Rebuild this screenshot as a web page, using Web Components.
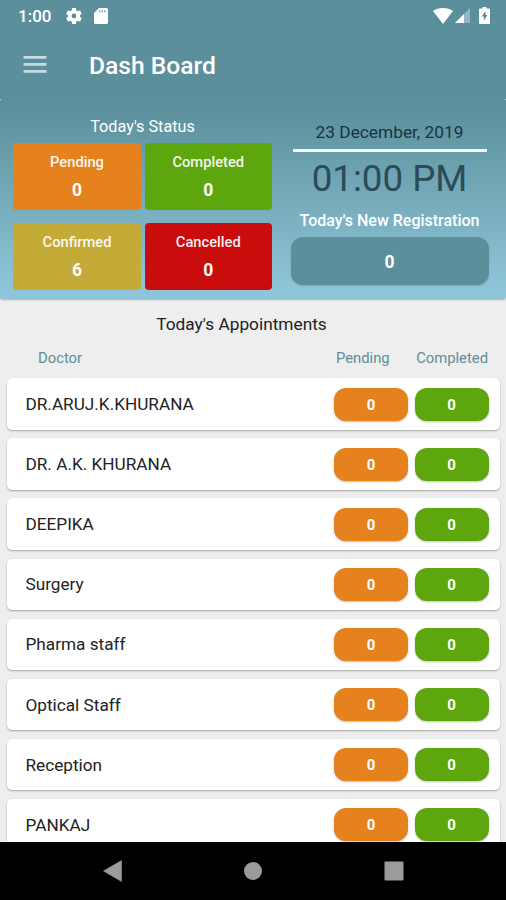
<!DOCTYPE html>
<html lang="en">
<head>
<meta charset="utf-8">
<title>Dash Board</title>
<style>
    body {
        margin: 0;
        width: 506px;
        height: 900px;
        overflow: hidden;
        background: #eeeeee;
        font-family: Roboto, "Liberation Sans", sans-serif;
        --teal: #5c8f9c;
        --orange: #e6821e;
        --green: #5da60d;
        --olive: #c4aa36;
        --red: #ca0c0d;
    }
</style>
</head>
<body>
<clinic-dashboard></clinic-dashboard>

<script>
class StatusBar extends HTMLElement {
    constructor() {
        super();
        this.attachShadow({ mode: 'open' });

        this.shadowRoot.innerHTML = `
            <style>
                :host {
                    display: flex;
                    align-items: center;
                    height: 32px;
                    box-sizing: border-box;
                    padding: 0 17px 1px 18px;
                    color: #fff;
                    font-size: 17px;
                    font-weight: 500;
                }
                .time { width: 48px; }
                .spacer { flex: 1; }
                svg { display: block; fill: currentColor; }
            </style>
            <span class="time"><slot></slot></span>
            <svg width="16" height="16" viewBox="2 2 20 20"><path d="M19.43 12.98c.04-.32.07-.64.07-.98s-.03-.66-.07-.98l2.11-1.65c.19-.15.24-.42.12-.64l-2-3.46c-.12-.22-.39-.3-.61-.22l-2.49 1c-.52-.4-1.08-.73-1.69-.98l-.38-2.65A.49.49 0 0 0 14 2h-4c-.25 0-.46.18-.49.42l-.38 2.65c-.61.25-1.17.59-1.69.98l-2.49-1c-.23-.09-.49 0-.61.22l-2 3.46c-.13.22-.07.49.12.64l2.11 1.65c-.04.32-.07.65-.07.98s.03.66.07.98l-2.11 1.65c-.19.15-.24.42-.12.64l2 3.46c.12.22.39.3.61.22l2.49-1c.52.4 1.08.73 1.69.98l.38 2.65c.03.24.24.42.49.42h4c.25 0 .46-.18.49-.42l.38-2.65c.61-.25 1.17-.59 1.69-.98l2.49 1c.23.09.49 0 .61-.22l2-3.46c.12-.22.07-.49-.12-.64zM12 15a3 3 0 1 1 0-6 3 3 0 0 1 0 6z"/></svg>
            <svg width="14" height="16" viewBox="0 0 14 16" style="margin-left:12px"><path d="M5 0h7.300Q14 0 14 1.600v12.800Q14 16 12.300 16H1.700Q0 16 0 14.400V5z"/><path d="M5 2h1.500v2.600H5zM7.500 2H9v2.600H7.500zM10 2h1.600v2.600H10z" fill="#5c8f9c" opacity=".6"/></svg>
            <span class="spacer"></span>
            <svg width="20" height="16" viewBox="0 0 20 16"><path d="M10 16 0 3Q4 0 10 0t10 3z"/></svg>
            <svg width="15" height="15" viewBox="0 0 15 15" style="margin-left:2px"><path d="M0 15 15 0v15z" opacity=".35"/><path d="M0 15 9 6v9z"/></svg>
            <svg width="11" height="17" viewBox="0 0 11 17" style="margin-left:9px;margin-right:-1px"><path fill-rule="evenodd" d="M3.500 0h4v1.500H10q1 0 1 1V16q0 1-1 1H1q-1 0-1-1V2.500q0-1 1-1h2.500zM6.500 4 2.700 9.500h2.100v4.300l3.600-5.700H6.500z"/></svg>
        `;
    }
}

class AppBar extends HTMLElement {
    constructor() {
        super();
        this.attachShadow({ mode: 'open' });

        this.shadowRoot.innerHTML = `
            <style>
                :host {
                    display: flex;
                    align-items: center;
                    height: 67px;
                    box-sizing: border-box;
                    padding: 0 23px 1px;
                    color: #fff;
                }
                svg { display: block; margin-bottom: 1px; }
                h1 {
                    margin: 2px 0 0 42px;
                    font-size: 24.600px;
                    font-weight: 500;
                    line-height: 30px;
                }
            </style>
            <svg width="24" height="17" viewBox="0 0 24 17" fill="#c6dbe2"><path d="M.5 0h23v2.700H.5zM.5 7h23v2.700H.5zM.5 14h23v2.700H.5z"/></svg>
            <h1><slot></slot></h1>
        `;
    }
}

class StatusTile extends HTMLElement {
    constructor() {
        super();
        this.attachShadow({ mode: 'open' });

        this.shadowRoot.innerHTML = `
            <style>
                :host {
                    display: flex;
                    flex-direction: column;
                    align-items: center;
                    box-sizing: border-box;
                    padding-top: 9.500px;
                    border-radius: 4px;
                    background: var(--tile-color);
                    color: #fff;
                    line-height: 20px;
                }
                .label { font-size: 14.700px; font-weight: 500; opacity: .93; }
                .count { margin-top: 8px; font-size: 17.500px; font-weight: 700; }
            </style>
            <span class="label"><slot></slot></span>
            <span class="count">${this.getAttribute('count') || '0'}</span>
        `;
        this.style.setProperty('--tile-color', `var(--${this.getAttribute('tint')})`);
    }
}

class SummaryPanel extends HTMLElement {
    constructor() {
        super();
        this.attachShadow({ mode: 'open' });

        this.shadowRoot.innerHTML = `
            <style>
                :host {
                    display: flex;
                    height: 199.500px;
                    box-sizing: border-box;
                    padding-left: 13px;
                    border-radius: 2px;
                    background: linear-gradient(#5c8f9c 0%, #5f939f 10%, #8fc5d8 95%);
                    box-shadow: 0 1px 2px rgba(0, 0, 0, .25);
                    color: #fff;
                }
                .status { width: 259px; }
                h2 {
                    margin: 18px 0 5.600px;
                    font-size: 16.200px;
                    font-weight: 400;
                    line-height: 20px;
                    text-align: center;
                }
                .tiles {
                    display: grid;
                    grid-template-columns: 128px 127.500px;
                    grid-auto-rows: 67px;
                    gap: 13px 3.500px;
                }
                .today {
                    display: flex;
                    flex-direction: column;
                    align-items: center;
                    width: 198px;
                    margin-left: 18.500px;
                }
                .date {
                    width: 194px;
                    margin-top: 23px;
                    padding-bottom: 7px;
                    border-bottom: 3px solid #f4fafb;
                    color: #17343f;
                    font-size: 17.300px;
                    line-height: 20px;
                    text-align: center;
                }
                .clock {
                    margin-top: 4.500px;
                    color: #2a4c58;
                    font-size: 36.700px;
                    font-weight: 400;
                    line-height: 44px;
                }
                .caption {
                    margin-top: 10.500px;
                    font-size: 16px;
                    font-weight: 500;
                    line-height: 20px;
                    white-space: nowrap;
                }
                .registrations {
                    width: 198px;
                    height: 48px;
                    margin-top: 6px;
                    border-radius: 12px;
                    background: var(--teal);
                    box-shadow: 0 1px 2px rgba(0, 0, 0, .15);
                    font-size: 17.500px;
                    font-weight: 700;
                    line-height: 50px;
                    text-align: center;
                }
            </style>
            <div class="status">
                <h2>Today's Status</h2>
                <div class="tiles"><slot></slot></div>
            </div>
            <div class="today">
                <div class="date">23 December, 2019</div>
                <div class="clock">01:00 PM</div>
                <div class="caption">Today's New Registration</div>
                <div class="registrations">0</div>
            </div>
        `;
    }
}

class DoctorRow extends HTMLElement {
    constructor() {
        super();
        this.attachShadow({ mode: 'open' });

        this.shadowRoot.innerHTML = `
            <style>
                :host {
                    display: flex;
                    align-items: center;
                    gap: 6.500px;
                    height: 51.600px;
                    flex-shrink: 0;
                    box-sizing: border-box;
                    padding: 0 11.500px 0 18.500px;
                    border-radius: 5px;
                    background: #fff;
                    box-shadow: 0 1px 2px rgba(0, 0, 0, .3);
                    color: #222;
                    font-size: 17.200px;
                }
                .name { flex: 1; }
                .pill {
                    width: 74px;
                    height: 33px;
                    border-radius: 12px;
                    box-shadow: 0 1px 2px rgba(0, 0, 0, .25);
                    color: #fff;
                    font-size: 15px;
                    font-weight: 700;
                    line-height: 34px;
                    text-align: center;
                }
                .pending { background: var(--orange); }
                .completed { background: var(--green); }
            </style>
            <span class="name"><slot></slot></span>
            <span class="pill pending">${this.getAttribute('pending') || '0'}</span>
            <span class="pill completed">${this.getAttribute('completed') || '0'}</span>
        `;
    }
}

class AppointmentList extends HTMLElement {
    constructor() {
        super();
        this.attachShadow({ mode: 'open' });

        this.shadowRoot.innerHTML = `
            <style>
                :host {
                    display: flex;
                    flex-direction: column;
                    flex: 1;
                    min-height: 0;
                    overflow: hidden;
                }
                h2 {
                    margin: 15.500px 23px 0 0;
                    color: #222;
                    font-size: 17.300px;
                    font-weight: 400;
                    line-height: 20px;
                    text-align: center;
                }
                .head {
                    display: flex;
                    margin: 14px 18px 0 38px;
                    color: #5d8f96;
                    font-size: 14.800px;
                    line-height: 20px;
                }
                .head :first-child { flex: 1; }
                .head :last-child { margin-left: 26.500px; }
                .rows {
                    display: flex;
                    flex-direction: column;
                    gap: 8.500px;
                    padding: 10.300px 6px 0 7px;
                }
            </style>
            <h2>Today's Appointments</h2>
            <div class="head"><span>Doctor</span><span>Pending</span><span>Completed</span></div>
            <div class="rows"><slot></slot></div>
        `;
    }
}

class NavBar extends HTMLElement {
    constructor() {
        super();
        this.attachShadow({ mode: 'open' });

        this.shadowRoot.innerHTML = `
            <style>
                :host {
                    display: flex;
                    align-items: center;
                    justify-content: center;
                    gap: 120.500px;
                    height: 58px;
                    box-sizing: border-box;
                    background: #000;
                }
                svg { display: block; fill: #9b9b9b; }
            </style>
            <svg width="20" height="22" viewBox="0 0 20 22"><path d="M.5 11 18.500.500v21z" stroke="#9b9b9b" stroke-width=".6" stroke-linejoin="round"/></svg>
            <svg width="20" height="20" viewBox="0 0 20 20"><circle cx="10" cy="10" r="9"/></svg>
            <svg width="20" height="20" viewBox="0 0 20 20"><rect x=".5" y=".5" width="19" height="19" rx="1"/></svg>
        `;
    }
}

class ClinicDashboard extends HTMLElement {
    constructor() {
        super();
        this.attachShadow({ mode: 'open' });

        const doctors = [
            'DR.ARUJ.K.KHURANA', 'DR. A.K. KHURANA', 'DEEPIKA', 'Surgery',
            'Pharma staff', 'Optical Staff', 'Reception', 'PANKAJ'
        ];

        this.shadowRoot.innerHTML = `
            <style>
                :host {
                    display: flex;
                    flex-direction: column;
                    height: 900px;
                }
                .top { background: var(--teal); }
            </style>
            <div class="top">
                <status-bar>1:00</status-bar>
                <app-bar>Dash Board</app-bar>
            </div>
            <summary-panel>
                <status-tile tint="orange" count="0">Pending</status-tile>
                <status-tile tint="green" count="0">Completed</status-tile>
                <status-tile tint="olive" count="6">Confirmed</status-tile>
                <status-tile tint="red" count="0">Cancelled</status-tile>
            </summary-panel>
            <appointment-list>
                ${doctors.map(name => `<doctor-row pending="0" completed="0">${name}</doctor-row>`).join('')}
            </appointment-list>
            <nav-bar></nav-bar>
        `;
    }
}

window.customElements.define('status-bar', StatusBar);
window.customElements.define('app-bar', AppBar);
window.customElements.define('status-tile', StatusTile);
window.customElements.define('summary-panel', SummaryPanel);
window.customElements.define('doctor-row', DoctorRow);
window.customElements.define('appointment-list', AppointmentList);
window.customElements.define('nav-bar', NavBar);
window.customElements.define('clinic-dashboard', ClinicDashboard);
</script>
</body>
</html>
